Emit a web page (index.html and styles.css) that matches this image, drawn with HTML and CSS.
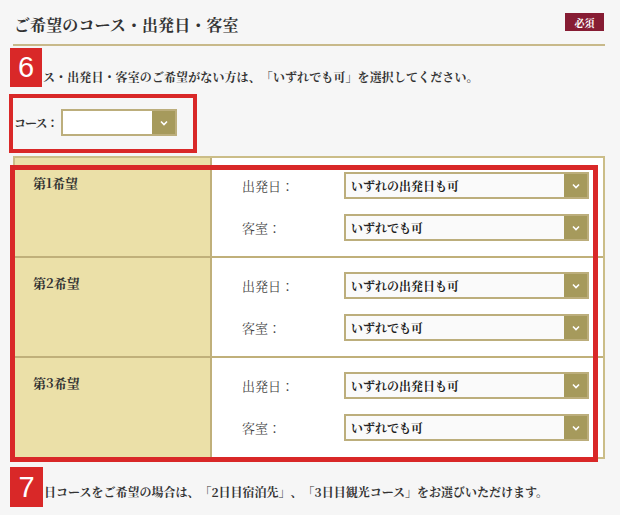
FILE: index.html
```html
<!DOCTYPE html>
<html lang="ja">
<head>
<meta charset="utf-8">
<link rel="stylesheet" href="styles.css">
</head>
<body>
<div class="page">
  <div class="head">
    <h2 class="title">ご希望のコース・出発日・客室</h2>
    <span class="req">必須</span>
  </div>
  <p class="note note1">ス・出発日・客室のご希望がない方は、「いずれでも可」を選択してください。</p>
  <div class="course">
    <span class="course-label">コース：</span>
    <div class="sel sel-course"><span class="sel-text"></span><span class="sel-arrow"><svg width="8" height="6" viewBox="0 0 8 6"><path d="M1 1.5 L4 4.5 L7 1.5" fill="none" stroke="#fff" stroke-width="1.6"/></svg></span></div>
  </div>

  <div class="table">
    <div class="row">
      <div class="head-cell">第1希望</div>
      <div class="body-cell">
        <div class="field"><span class="flabel">出発日：</span><div class="sel"><span class="sel-text">いずれの出発日も可</span><span class="sel-arrow"><svg width="8" height="6" viewBox="0 0 8 6"><path d="M1 1.5 L4 4.5 L7 1.5" fill="none" stroke="#fff" stroke-width="1.6"/></svg></span></div></div>
        <div class="field"><span class="flabel">客室：</span><div class="sel"><span class="sel-text">いずれでも可</span><span class="sel-arrow"><svg width="8" height="6" viewBox="0 0 8 6"><path d="M1 1.5 L4 4.5 L7 1.5" fill="none" stroke="#fff" stroke-width="1.6"/></svg></span></div></div>
      </div>
    </div>
    <div class="row">
      <div class="head-cell">第2希望</div>
      <div class="body-cell">
        <div class="field"><span class="flabel">出発日：</span><div class="sel"><span class="sel-text">いずれの出発日も可</span><span class="sel-arrow"><svg width="8" height="6" viewBox="0 0 8 6"><path d="M1 1.5 L4 4.5 L7 1.5" fill="none" stroke="#fff" stroke-width="1.6"/></svg></span></div></div>
        <div class="field"><span class="flabel">客室：</span><div class="sel"><span class="sel-text">いずれでも可</span><span class="sel-arrow"><svg width="8" height="6" viewBox="0 0 8 6"><path d="M1 1.5 L4 4.5 L7 1.5" fill="none" stroke="#fff" stroke-width="1.6"/></svg></span></div></div>
      </div>
    </div>
    <div class="row">
      <div class="head-cell">第3希望</div>
      <div class="body-cell">
        <div class="field"><span class="flabel">出発日：</span><div class="sel"><span class="sel-text">いずれの出発日も可</span><span class="sel-arrow"><svg width="8" height="6" viewBox="0 0 8 6"><path d="M1 1.5 L4 4.5 L7 1.5" fill="none" stroke="#fff" stroke-width="1.6"/></svg></span></div></div>
        <div class="field"><span class="flabel">客室：</span><div class="sel"><span class="sel-text">いずれでも可</span><span class="sel-arrow"><svg width="8" height="6" viewBox="0 0 8 6"><path d="M1 1.5 L4 4.5 L7 1.5" fill="none" stroke="#fff" stroke-width="1.6"/></svg></span></div></div>
      </div>
    </div>
  </div>

  <p class="note note2">日コースをご希望の場合は、「2日目宿泊先」、「3日目観光コース」をお選びいただけます。</p>

  <div class="mark mark6">6</div>
  <div class="outline outline-course"></div>
  <div class="outline outline-table"></div>
  <div class="mark mark7">7</div>
</div>
</body>
</html>
```

FILE: styles.css
```css
* { box-sizing: border-box; }
html, body { margin: 0; padding: 0; }
body {
  background: #f6f6f6;
  color: #333;
  font-family: "Noto Serif CJK JP", "Liberation Serif", "Noto Sans CJK JP", serif;
  width: 620px;
  height: 515px;
  overflow: hidden;
  text-spacing-trim: space-all;
}
.page {
  position: relative;
  padding: 0 15px 0 13px;
}
.head {
  height: 46px;
  display: flex;
  align-items: center;
  justify-content: space-between;
  border-bottom: 2px solid #c8b98a;
  padding: 4px 1px 0 1px;
}
.title {
  margin: 0;
  font-size: 16px;
  font-weight: bold;
  color: #333;
  letter-spacing: 0.1px;
}
.req {
  background: #861c33;
  color: #fff;
  font-size: 10px;
  font-weight: bold;
  width: 39px;
  height: 18px;
  display: flex;
  align-items: center;
  justify-content: center;
  margin-top: -4px;
}
.note {
  margin: 22px 0 0 0;
  font-size: 12px;
  line-height: 18px;
  font-weight: bold;
  color: #333;
  letter-spacing: 0.1px;
  white-space: nowrap;
}
.note1 { padding-left: 30px; }
.course {
  margin-top: 23px;
  display: flex;
  align-items: center;
  height: 27px;
}
.course-label {
  font-size: 12px;
  font-weight: bold;
  width: 48px;
  padding-left: 1px;
  white-space: nowrap;
  letter-spacing: -1px;
}
.sel {
  display: flex;
  height: 27px;
  border: 2px solid #bcae7c;
  background: #fafafa;
}
.sel-course { width: 116px; background: #fff; }
.sel-text {
  flex: 1;
  font-size: 12px;
  font-weight: bold;
  color: #222;
  display: flex;
  align-items: center;
  padding-left: 5px;
}
.sel-arrow {
  width: 23px;
  background: #a69a5c;
  display: flex;
  align-items: center;
  justify-content: center;
}
.table {
  margin-top: 20px;
  border: 2px solid #cbbd88;
  background: #fff;
}
.row {
  display: flex;
  height: 100px;
}
.row:first-child { height: 98px; }
.row:last-child { height: 101px; }
.row + .row { border-top: 2px solid #c0b07a; }
.head-cell {
  width: 197px;
  background: #ebe0a8;
  border-right: 2px solid #c0b07a;
  font-size: 13px;
  font-weight: bold;
  color: #333;
  padding: 15px 0 0 18px;
}
.body-cell {
  flex: 1;
  display: flex;
  flex-direction: column;
  gap: 15px;
  padding: 14px 14px 0 30px;
}
.field {
  display: flex;
  align-items: center;
}
.flabel {
  width: 102px;
  font-size: 13px;
  color: #444;
}
.field .sel { flex: 1; }
.note2 { margin-top: 24px; padding-left: 31px; letter-spacing: 0; }

.mark {
  position: absolute;
  background: #d92828;
  color: #fff;
  font-family: "Liberation Sans", "DejaVu Sans", sans-serif;
  font-size: 29px;
  display: flex;
  align-items: center;
  justify-content: center;
}
.mark6 { left: 10px; top: 48px; width: 32px; height: 39px; }
.mark7 { left: 10px; top: 467px; width: 33px; height: 40px; }
.outline {
  position: absolute;
  border: 4px solid #d92828;
}
.outline-course { left: 9px; top: 94px; width: 188px; height: 59px; }
.outline-table { left: 10px; top: 165px; width: 588px; height: 297px; border-width: 5px; }
```
